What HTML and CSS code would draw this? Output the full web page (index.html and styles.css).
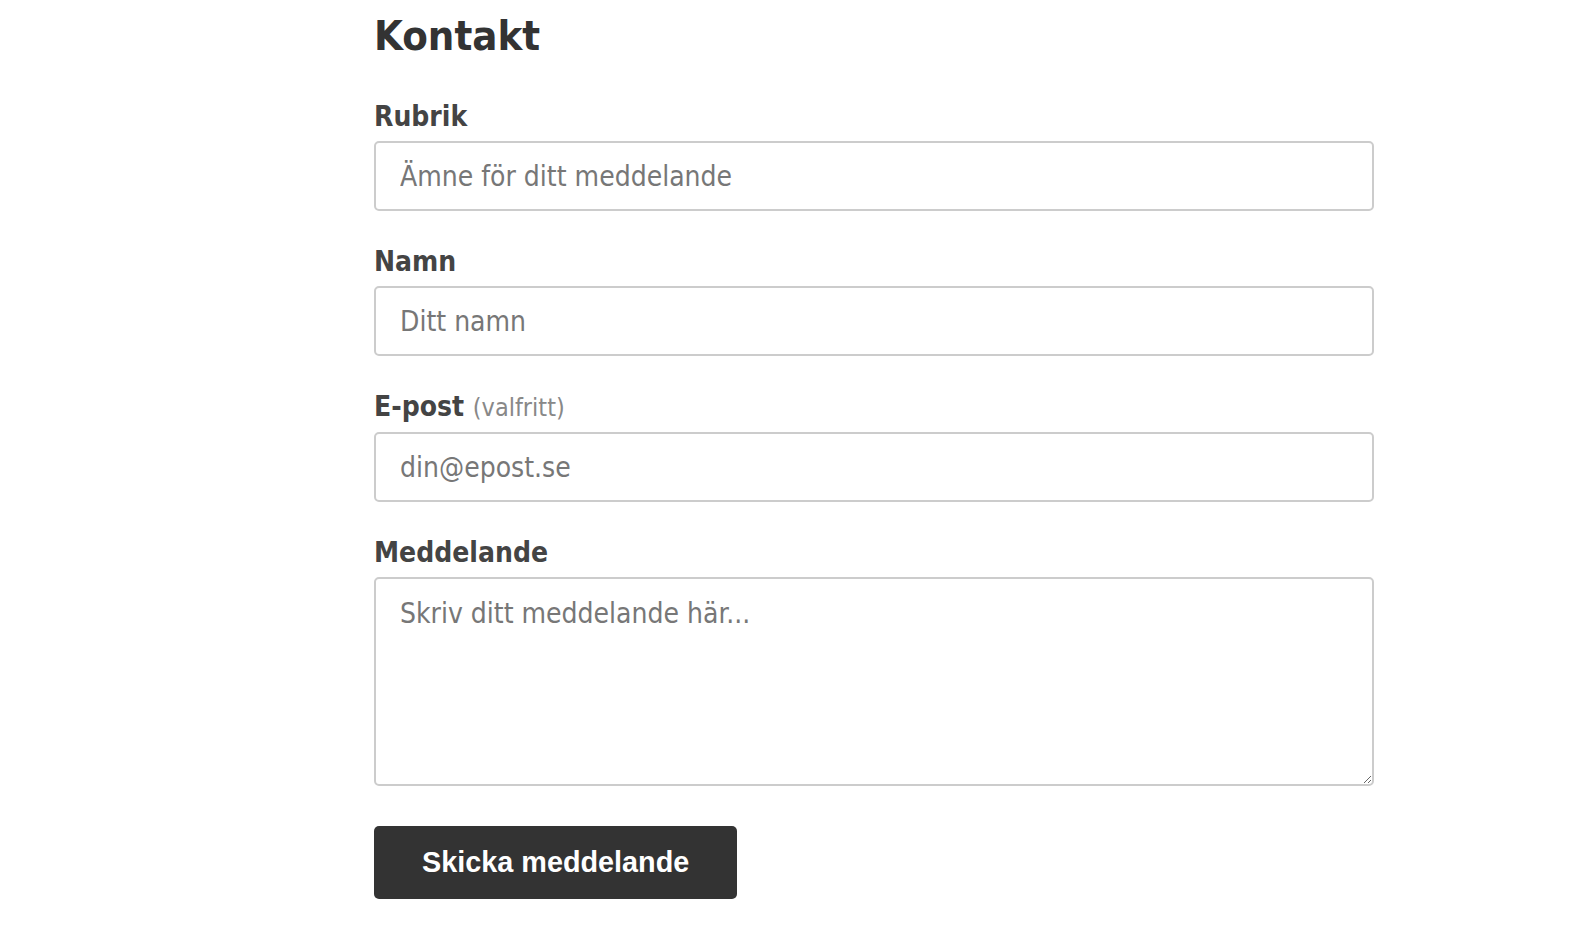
FILE: index.html
```html
<!DOCTYPE html>
<html lang="sv">
<head>
<meta charset="utf-8">
<title>Kontakt</title>
<link rel="stylesheet" href="styles.css">
</head>
<body>
<main class="page">
  <h1 class="title">Kontakt</h1>
  <form class="form">
    <div class="group">
      <label class="label" for="rubrik">Rubrik</label>
      <input class="field" id="rubrik" type="text" placeholder="Ämne för ditt meddelande">
    </div>
    <div class="group">
      <label class="label" for="namn">Namn</label>
      <input class="field" id="namn" type="text" placeholder="Ditt namn">
    </div>
    <div class="group">
      <label class="label" for="epost">E-post <span class="optional">(valfritt)</span></label>
      <input class="field" id="epost" type="email" placeholder="din@epost.se">
    </div>
    <div class="group">
      <label class="label" for="meddelande">Meddelande</label>
      <textarea class="field area" id="meddelande" placeholder="Skriv ditt meddelande här..."></textarea>
    </div>
    <button class="submit" type="button">Skicka meddelande</button>
  </form>
</main>
</body>
</html>
```
FILE: styles.css
```css
html, body {
  margin: 0;
  padding: 0;
  background: #fff;
}
body {
  font-family: "DejaVu Sans Condensed", "DejaVu Sans", sans-serif;
  color: #333;
}
.page {
  width: 1000px;
  margin-left: 374px;
  padding-top: 11px;
}
.title {
  margin: 0 0 39px;
  font-size: 41.5px;
  line-height: 50px;
  font-weight: bold;
  color: #333;
}
.form {
  display: flex;
  flex-direction: column;
}
.group {
  display: flex;
  flex-direction: column;
  margin-bottom: 34px;
}
.label {
  font-size: 28px;
  line-height: 34px;
  font-weight: bold;
  color: #444;
  margin-bottom: 7px;
}
.optional {
  font-weight: normal;
  font-size: 25px;
  color: #888;
}
.field {
  box-sizing: border-box;
  width: 1000px;
  height: 70px;
  margin: 0;
  padding: 0 24px;
  border: 2px solid #ccc;
  border-radius: 5px;
  font-family: "DejaVu Sans Condensed", "DejaVu Sans", sans-serif;
  font-size: 28px;
  color: #333;
  background: #fff;
  outline: none;
}
.field::placeholder {
  color: #777;
}
.area {
  height: 209px;
  padding: 18px 24px;
  resize: vertical;
  line-height: normal;
}
.group:last-of-type {
  margin-bottom: 40px;
}
.submit {
  align-self: flex-start;
  height: 73px;
  padding: 0 48px;
  border: 0;
  border-radius: 5px;
  background: #333;
  color: #fff;
  font-family: "Liberation Sans", Arial, sans-serif;
  font-weight: bold;
  font-size: 28.8px;
  cursor: pointer;
}
```
